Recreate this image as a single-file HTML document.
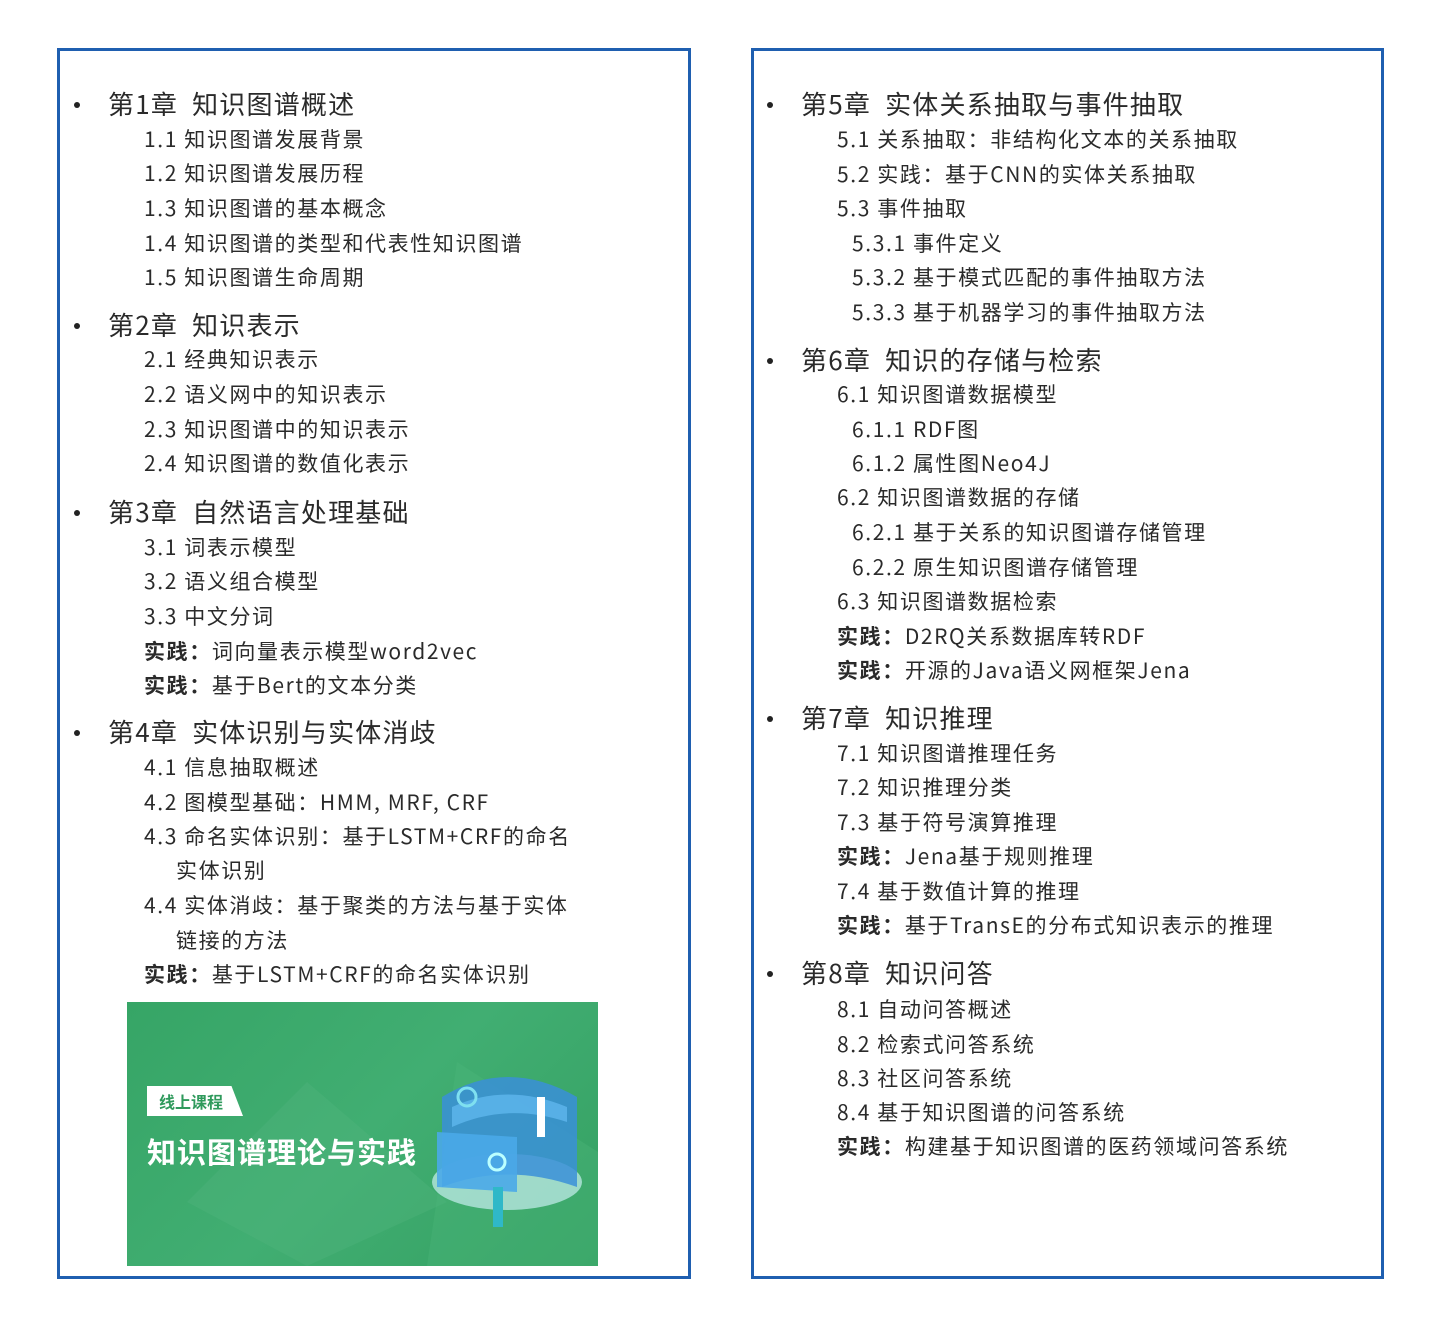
<!DOCTYPE html>
<html><head><meta charset="utf-8"><style>
body{margin:0;width:1440px;height:1329px;background:#fff;position:relative;font-family:"Noto Sans CJK SC","Liberation Sans",sans-serif;color:#2a2a2a;overflow:hidden}
.box{position:absolute;border:3px solid #1f5fb0;box-sizing:border-box}
.l{position:absolute;white-space:nowrap;line-height:34px;font-size:21px;font-weight:400;letter-spacing:1.6px}
.h{font-size:26px;font-weight:400;line-height:40px;letter-spacing:1.2px}
.h::before{content:"";position:absolute;left:-34px;top:18px;width:6px;height:6px;border-radius:50%;background:#222}
b{font-weight:700}
</style></head><body>
<div class="box" style="left:57px;top:48px;width:634px;height:1231px"></div>
<div class="box" style="left:751px;top:48px;width:633px;height:1231px"></div>

<div class="l h" style="left:108px;top:84px">第1章&nbsp; 知识图谱概述</div>
<div class="l" style="left:144px;top:122px">1.1 知识图谱发展背景</div>
<div class="l" style="left:144px;top:156px">1.2 知识图谱发展历程</div>
<div class="l" style="left:144px;top:191px">1.3 知识图谱的基本概念</div>
<div class="l" style="left:144px;top:226px">1.4 知识图谱的类型和代表性知识图谱</div>
<div class="l" style="left:144px;top:260px">1.5 知识图谱生命周期</div>
<div class="l h" style="left:108px;top:305px">第2章&nbsp; 知识表示</div>
<div class="l" style="left:144px;top:342px">2.1 经典知识表示</div>
<div class="l" style="left:144px;top:377px">2.2 语义网中的知识表示</div>
<div class="l" style="left:144px;top:412px">2.3 知识图谱中的知识表示</div>
<div class="l" style="left:144px;top:446px">2.4 知识图谱的数值化表示</div>
<div class="l h" style="left:108px;top:492px">第3章&nbsp; 自然语言处理基础</div>
<div class="l" style="left:144px;top:530px">3.1 词表示模型</div>
<div class="l" style="left:144px;top:564px">3.2 语义组合模型</div>
<div class="l" style="left:144px;top:599px">3.3 中文分词</div>
<div class="l" style="left:144px;top:634px"><b>实践：</b>词向量表示模型word2vec</div>
<div class="l" style="left:144px;top:668px"><b>实践：</b>基于Bert的文本分类</div>
<div class="l h" style="left:108px;top:712px">第4章&nbsp; 实体识别与实体消歧</div>
<div class="l" style="left:144px;top:750px">4.1 信息抽取概述</div>
<div class="l" style="left:144px;top:785px">4.2 图模型基础：HMM, MRF, CRF</div>
<div class="l" style="left:144px;top:819px">4.3 命名实体识别：基于LSTM+CRF的命名</div>
<div class="l" style="left:176px;top:853px">实体识别</div>
<div class="l" style="left:144px;top:888px">4.4 实体消歧：基于聚类的方法与基于实体</div>
<div class="l" style="left:176px;top:923px">链接的方法</div>
<div class="l" style="left:144px;top:957px"><b>实践：</b>基于LSTM+CRF的命名实体识别</div>

<div style="position:absolute;left:127px;top:1002px;width:471px;height:264px;background:linear-gradient(135deg,#36a566,#41ae72 50%,#34a062);overflow:hidden">
 <svg width="471" height="264" style="position:absolute;left:0;top:0">
  <polygon points="180,80 320,200 180,264 60,200" fill="#4fb57c" opacity=".4"/>
  <polygon points="330,60 471,150 471,264 300,264" fill="#4db67c" opacity=".35"/>
  <ellipse cx="380" cy="180" rx="75" ry="28" fill="#c8eef0" opacity=".7"/>
  <path d="M315,95 Q380,55 450,95 L450,185 Q380,160 315,185 Z" fill="#3a8fd8" opacity=".85"/>
  <path d="M325,105 Q380,80 440,105 L440,120 Q380,100 325,125 Z" fill="#5fb6ee" opacity=".8"/>
  <path d="M310,130 L390,135 L390,190 L310,185 Z" fill="#4aa8e8" opacity=".9"/>
  <circle cx="340" cy="95" r="9" fill="none" stroke="#7fe0f0" stroke-width="3"/>
  <circle cx="370" cy="160" r="8" fill="none" stroke="#bff" stroke-width="3"/>
  <rect x="410" y="95" width="8" height="40" fill="#fff"/>
  <rect x="366" y="185" width="10" height="40" fill="#2fb8c8"/>
 </svg>
 <div style="position:absolute;left:20px;top:84px;width:96px;height:30px;background:#fff;clip-path:polygon(0 0,88% 0,100% 100%,0 100%);color:#2f9a5c;font-weight:700;font-size:16px;line-height:30px;padding-left:12px;box-sizing:border-box">线上课程</div>
 <div style="position:absolute;left:20px;top:128px;color:#fff;font-size:29px;font-weight:700;white-space:nowrap;letter-spacing:1px">知识图谱理论与实践</div>
</div>

<div class="l h" style="left:801px;top:84px">第5章&nbsp; 实体关系抽取与事件抽取</div>
<div class="l" style="left:837px;top:122px">5.1 关系抽取：非结构化文本的关系抽取</div>
<div class="l" style="left:837px;top:157px">5.2 实践：基于CNN的实体关系抽取</div>
<div class="l" style="left:837px;top:191px">5.3 事件抽取</div>
<div class="l" style="left:852px;top:226px">5.3.1 事件定义</div>
<div class="l" style="left:852px;top:260px">5.3.2 基于模式匹配的事件抽取方法</div>
<div class="l" style="left:852px;top:295px">5.3.3 基于机器学习的事件抽取方法</div>
<div class="l h" style="left:801px;top:340px">第6章&nbsp; 知识的存储与检索</div>
<div class="l" style="left:837px;top:377px">6.1 知识图谱数据模型</div>
<div class="l" style="left:852px;top:412px">6.1.1 RDF图</div>
<div class="l" style="left:852px;top:446px">6.1.2 属性图Neo4J</div>
<div class="l" style="left:837px;top:480px">6.2 知识图谱数据的存储</div>
<div class="l" style="left:852px;top:515px">6.2.1 基于关系的知识图谱存储管理</div>
<div class="l" style="left:852px;top:550px">6.2.2 原生知识图谱存储管理</div>
<div class="l" style="left:837px;top:584px">6.3 知识图谱数据检索</div>
<div class="l" style="left:837px;top:619px"><b>实践：</b>D2RQ关系数据库转RDF</div>
<div class="l" style="left:837px;top:653px"><b>实践：</b>开源的Java语义网框架Jena</div>
<div class="l h" style="left:801px;top:698px">第7章&nbsp; 知识推理</div>
<div class="l" style="left:837px;top:736px">7.1 知识图谱推理任务</div>
<div class="l" style="left:837px;top:770px">7.2 知识推理分类</div>
<div class="l" style="left:837px;top:805px">7.3 基于符号演算推理</div>
<div class="l" style="left:837px;top:839px"><b>实践：</b>Jena基于规则推理</div>
<div class="l" style="left:837px;top:874px">7.4 基于数值计算的推理</div>
<div class="l" style="left:837px;top:908px"><b>实践：</b>基于TransE的分布式知识表示的推理</div>
<div class="l h" style="left:801px;top:953px">第8章&nbsp; 知识问答</div>
<div class="l" style="left:837px;top:992px">8.1 自动问答概述</div>
<div class="l" style="left:837px;top:1027px">8.2 检索式问答系统</div>
<div class="l" style="left:837px;top:1061px">8.3 社区问答系统</div>
<div class="l" style="left:837px;top:1095px">8.4 基于知识图谱的问答系统</div>
<div class="l" style="left:837px;top:1129px"><b>实践：</b>构建基于知识图谱的医药领域问答系统</div>
</body></html>
